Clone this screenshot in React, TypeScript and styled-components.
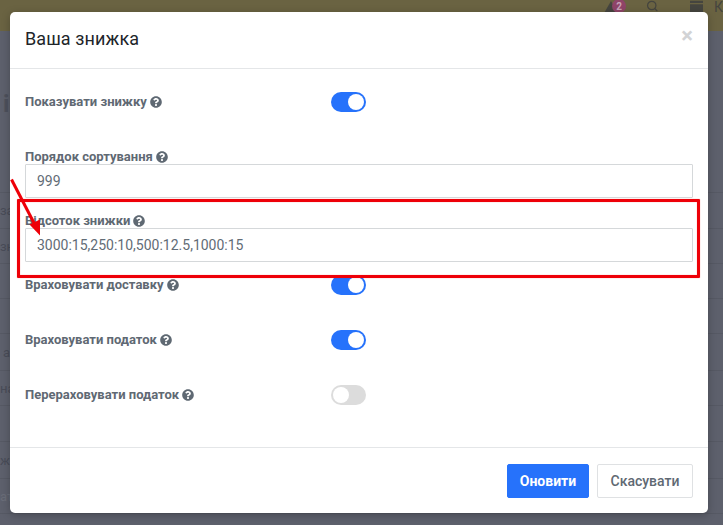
import React from "react";
import styled, { createGlobalStyle } from "styled-components";
import { Search } from "lucide-react";

const Global = createGlobalStyle`
  html, body { margin: 0; padding: 0; }
  body { width: 723px; height: 525px; overflow: hidden; background: #5d606c; font-family: Roboto, "Noto Sans", sans-serif; }
  * { box-sizing: border-box; }
`;

const Page = styled.div`
  position: relative;
  width: 723px;
  height: 525px;
  overflow: hidden;
  background: #5d606c;
`;

const TopBar = styled.div`
  height: 31px;
  background: #6a6342;
  display: flex;
  align-items: flex-start;
  padding-left: 603px;
  color: #45453f;
  overflow: hidden;
`;

const AlertIcon = styled.div`
  position: relative;
  width: 16px;
  height: 14px;
`;

const Badge = styled.span`
  position: absolute;
  left: 9px;
  top: -1px;
  width: 14px;
  height: 14px;
  border-radius: 50%;
  background: #8f4468;
  color: #c9a3b8;
  font-size: 10px;
  font-weight: 700;
  display: flex;
  align-items: center;
  justify-content: center;
`;

const SearchIcon = styled(Search)`
  margin-left: 27px;
  margin-top: -1px;
`;

const FolderIcon = styled.svg`
  margin-left: 31px;
`;

const TopLetter = styled.span`
  margin-left: 11px;
  font-size: 14px;
  line-height: 15px;
`;

const BackHeading = styled.div`
  height: 121px;
  padding-top: 59px;
  padding-left: 3px;
  font-size: 24px;
  line-height: 28px;
  font-weight: 700;
  color: #4d505b;
`;

const BackRow = styled.div<{ $h: number; $faint?: boolean; $shift?: number }>`
  height: ${(p) => p.$h}px;
  border-bottom: 1px solid #565964;
  display: flex;
  align-items: center;
  padding-left: ${(p) => p.$shift ?? 0}px;
  font-size: 13px;
  color: ${(p) => (p.$faint ? "#6a6d78" : "#494c58")};
`;

const Modal = styled.div`
  position: absolute;
  left: 10px;
  top: 12px;
  width: 698px;
  height: 501px;
  background: #fff;
  border-radius: 5px;
  display: flex;
  flex-direction: column;
  box-shadow: 0 2px 8px rgba(0, 0, 0, 0.25);
`;

const Header = styled.div`
  height: 57px;
  flex: none;
  display: flex;
  align-items: center;
  justify-content: space-between;
  padding: 0 15px 3px;
  border-bottom: 1px solid #e4e6e8;
`;

const Title = styled.h5`
  margin: 0;
  font-size: 18px;
  font-weight: 400;
  letter-spacing: 0.1px;
  color: #212529;
`;

const Close = styled.span`
  font-size: 22px;
  font-weight: 700;
  color: #d2d3d5;
  line-height: 1;
  margin-top: -5px;
`;

const Body = styled.div`
  flex: 1;
  padding: 0 15px;
  display: flex;
  flex-direction: column;
`;

const SwitchRow = styled.div<{ $top: number }>`
  height: 20px;
  margin-top: ${(p) => p.$top}px;
  display: grid;
  grid-template-columns: 306px 35px;
  align-items: center;
`;

const FieldBlock = styled.div<{ $h: number }>`
  display: flex;
  flex-direction: column;
  height: ${(p) => p.$h}px;
  justify-content: flex-end;
`;

const Label = styled.label`
  display: flex;
  align-items: center;
  gap: 3px;
  font-size: 13px;
  font-weight: 700;
  color: #5f6973;
  line-height: 16px;
`;

const FieldLabel = styled(Label)`
  margin: 0 0 -1px;
`;

const Input = styled.div`
  height: 34px;
  border: 1px solid #d5d8da;
  border-radius: 1px;
  padding: 0 11px;
  display: flex;
  align-items: center;
  font-size: 14px;
  color: #626c76;
`;

const Track = styled.span<{ $on: boolean }>`
  width: 35px;
  height: 20px;
  border-radius: 10px;
  background: ${(p) => (p.$on ? "#2672fb" : "#dcdcdc")};
  display: flex;
  align-items: center;
  justify-content: ${(p) => (p.$on ? "flex-end" : "flex-start")};
  padding: 0 2px;
`;

const Knob = styled.span`
  width: 16px;
  height: 16px;
  border-radius: 50%;
  background: #fff;
`;

const Footer = styled.div`
  height: 66px;
  flex: none;
  border-top: 1px solid #e4e6e8;
  display: flex;
  justify-content: flex-end;
  align-items: center;
  gap: 8px;
  padding: 0 15px;
`;

const Button = styled.button<{ $primary?: boolean }>`
  height: 34px;
  width: ${(p) => (p.$primary ? "82px" : "96px")};
  border-radius: 2px;
  font-family: inherit;
  font-size: 14px;
  font-weight: ${(p) => (p.$primary ? 700 : 500)};
  color: ${(p) => (p.$primary ? "#fff" : "#5f6973")};
  background: ${(p) => (p.$primary ? "#2672fb" : "#fff")};
  border: 1px solid ${(p) => (p.$primary ? "#2672fb" : "#dfe1e3")};
  padding: 0;
`;

const Highlight = styled.div`
  position: absolute;
  left: 17px;
  top: 199px;
  width: 683px;
  height: 79px;
  border: 3px solid #ee0008;
  border-radius: 1px;
  box-shadow: 0 0 1px rgba(238, 0, 8, 0.6), inset 0 0 1px rgba(238, 0, 8, 0.6);
  pointer-events: none;
`;

const Arrow = styled.svg`
  position: absolute;
  left: 0;
  top: 170px;
`;

const Help = () => (
  <svg width="12" height="12" viewBox="0 0 512 512" fill="#5f6973">
    <path d="M504 256c0 137-111 248-248 248S8 393 8 256 119 8 256 8s248 111 248 248zM262.700 90c-54.500 0-89.300 23-116.500 63.800-3.500 5.300-2.400 12.400 2.700 16.300l34.700 26.300c5.200 3.900 12.600 3 16.700-2.100 17.900-22.700 30.100-35.800 57.300-35.800 20.400 0 45.700 13.100 45.700 33 0 15-12.400 22.700-32.600 34-23.600 13.200-54.800 29.700-54.800 70.900V300c0 6.600 5.400 12 12 12h56c6.600 0 12-5.400 12-12v-1.300c0-28.600 83.400-29.700 83.400-107 0-58.200-60.400-102.300-116.600-102.300zM256 338c-25.400 0-46 20.600-46 46s20.600 46 46 46 46-20.600 46-46-20.600-46-46-46z" />
  </svg>
);

const SwitchField = ({ label, on, top }: { label: string; on: boolean; top: number }) => (
  <SwitchRow $top={top}>
    <Label>
      {label} <Help />
    </Label>
    <Track $on={on}>
      <Knob />
    </Track>
  </SwitchRow>
);

const TextField = ({ label, value, h }: { label: string; value: string; h: number }) => (
  <FieldBlock $h={h}>
    <FieldLabel>
      {label} <Help />
    </FieldLabel>
    <Input>{value}</Input>
  </FieldBlock>
);

const backRows: { h: number; text?: string; faint?: boolean; shift?: number }[] = [
  { h: 41 },
  { h: 36, text: "за" },
  { h: 35, text: "зн" },
  { h: 35 },
  { h: 35 },
  { h: 37, text: "а", shift: 3 },
  { h: 35, text: "на" },
  { h: 36 },
  { h: 37, text: "ж" },
  { h: 35, text: "ат", faint: true },
];

export default function App() {
  return (
    <Page>
      <Global />
      <TopBar>
        <AlertIcon>
          <svg width="16" height="14" viewBox="0 0 16 14" fill="currentColor">
            <path d="M8 0 16 14H0z" />
          </svg>
          <Badge>2</Badge>
        </AlertIcon>
        <SearchIcon size={14} strokeWidth={2.4} />
        <FolderIcon width="15" height="13" viewBox="0 0 15 13" fill="currentColor">
          <path d="M0 0h15v2.500H0zM0 4h15v9H0z" />
        </FolderIcon>
        <TopLetter>К</TopLetter>
      </TopBar>
      <BackHeading>i</BackHeading>
      {backRows.map((r, i) => (
        <BackRow key={i} $h={r.h} $faint={r.faint} $shift={r.shift}>
          {r.text}
        </BackRow>
      ))}
      <Modal>
        <Header>
          <Title>Ваша знижка</Title>
          <Close>×</Close>
        </Header>
        <Body>
          <SwitchField label="Показувати знижку" on top={23} />
          <TextField label="Порядок сортування" value="999" h={86} />
          <TextField label="Відсоток знижки" value="3000:15,250:10,500:12.5,1000:15" h={64} />
          <SwitchField label="Враховувати доставку" on top={13} />
          <SwitchField label="Враховувати податок" on top={35} />
          <SwitchField label="Перераховувати податок" on={false} top={35} />
        </Body>
        <Footer>
          <Button $primary>Оновити</Button>
          <Button>Скасувати</Button>
        </Footer>
      </Modal>
      <Highlight />
      <Arrow width="50" height="75" viewBox="0 0 50 75">
        <line x1="11.500" y1="9.500" x2="35" y2="55" stroke="#ee0008" strokeWidth="3" />
        <polygon points="40,65.500 29.500,54.500 40,49.500" fill="#ee0008" />
      </Arrow>
    </Page>
  );
}
